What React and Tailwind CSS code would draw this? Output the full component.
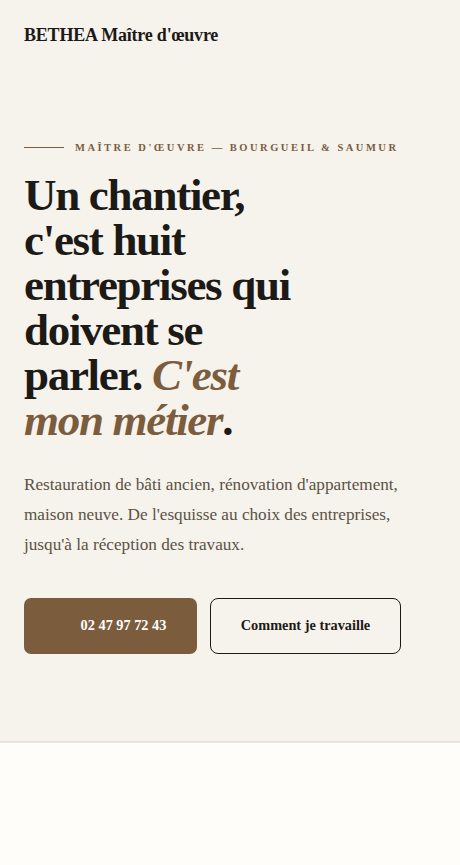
export default function App() {
  return (
    <div className="min-h-[865px] bg-[#fefdf9] font-['Liberation_Serif',serif]">
      <section className="bg-[#f6f2ec] border-b-2 border-[#e6e3de] px-6 pb-[87px]">
        {/* Header */}
        <header className="pt-[22px]">
          <p className="text-[18px] font-bold text-[#1c1a17] tracking-[-0.2px]">BETHEA Maître d'œuvre</p>
        </header>

        {/* Eyebrow */}
        <div className="mt-[91px] flex items-center gap-[11px]">
          <span className="block w-10 h-px bg-[#7b5d3e]" />
          <p className="text-[10.5px] font-bold uppercase tracking-[2.5px] text-[#7b5d3e]">
            Maître d'œuvre — Bourgueil &amp; Saumur
          </p>
        </div>

        {/* Headline */}
        <h1 className="mt-[17px] text-[45px] leading-[45px] font-bold tracking-[-1.3px] text-[#1c1a17]">
          Un chantier,<br />
          c'est huit<br />
          entreprises qui<br />
          doivent se<br />
          parler. <em className="text-[#7b5d3e]">C'est<br />mon métier</em>.
        </h1>

        {/* Intro */}
        <p className="mt-[27px] text-[17.2px] leading-[30px] text-[#5b5346] max-w-[400px]">
          Restauration de bâti ancien, rénovation d'appartement, maison neuve. De l'esquisse au choix des entreprises, jusqu'à la réception des travaux.
        </p>

        {/* Actions */}
        <div className="mt-[38px] flex gap-[13px]">
          <a className="w-[173px] h-[56px] rounded-[7px] bg-[#7b5d3e] text-white flex items-center justify-center gap-2 text-[14.3px] font-bold">
            <span className="w-[18px] h-[18px]" />
            02 47 97 72 43
          </a>
          <a className="w-[191px] h-[56px] rounded-[8px] border-[1.5px] border-[#1c1a17] text-[#1c1a17] flex items-center justify-center text-[14.3px] font-bold">
            Comment je travaille
          </a>
        </div>
      </section>
    </div>
  );
}
